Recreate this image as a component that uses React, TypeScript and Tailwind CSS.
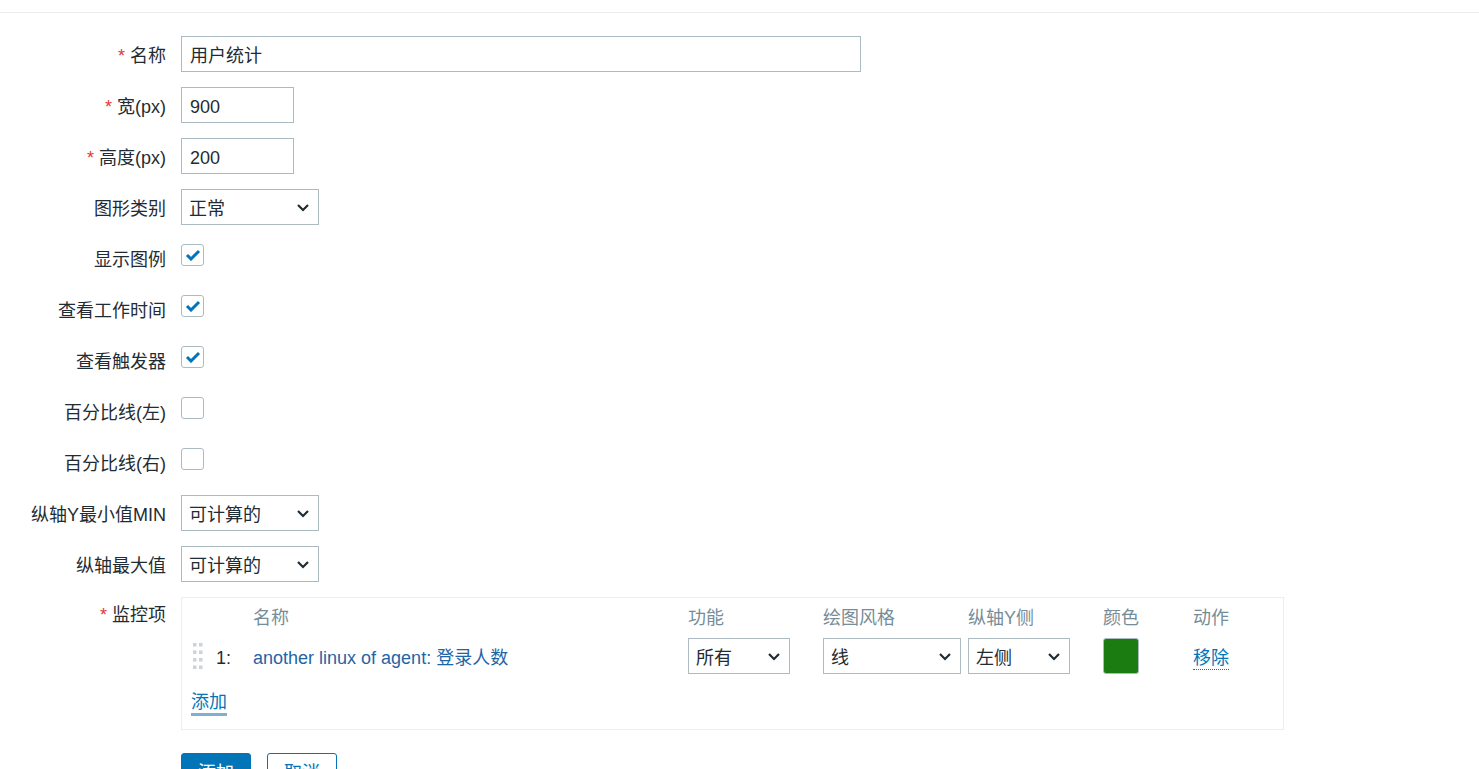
import React from "react";

const FONT = { fontFamily: '"Liberation Sans", Arial, "Noto Sans CJK SC", sans-serif' };

function Chevron() {
  return (
    <svg width="14" height="9" viewBox="0 0 14 9" className="shrink-0">
      <path d="M2 2 L7 7 L12 2" fill="none" stroke="#1f2c33" strokeWidth="2.2" />
    </svg>
  );
}

function Select({ value, width }: { value: string; width: string }) {
  return (
    <div className={`${width} h-[36px] border border-[#acbbc2] bg-white flex items-center justify-between pl-[7px] pr-[8px] text-[#1f2c33]`}>
      <span className="pt-[3px]">{value}</span>
      <Chevron />
    </div>
  );
}

function Checkbox({ checked }: { checked?: boolean }) {
  return (
    <div className="w-[23px] h-[22px] mt-[4px] border border-[#acbbc2] rounded-[3px] bg-white flex items-center justify-center">
      {checked && (
        <svg width="16" height="12" viewBox="0 0 16 12">
          <path d="M2 6 L6 10 L14 2" fill="none" stroke="#0275b8" strokeWidth="3" />
        </svg>
      )}
    </div>
  );
}

function Row({ label, required, children, top }: { label: string; required?: boolean; children: React.ReactNode; top?: boolean }) {
  return (
    <div className="flex">
      <div className={`w-[166px] shrink-0 h-[36px] flex ${top ? "items-start pt-[6px]" : "items-center pt-[3px]"} justify-end text-[#1f2c33] whitespace-nowrap`}>
        {required && <span className="text-[#e33734] mr-[5px]">*</span>}
        {label}
      </div>
      <div className="ml-[15px] flex-1 min-w-0">{children}</div>
    </div>
  );
}

function TextInput({ value, width }: { value: string; width: string }) {
  return (
    <div className={`${width} h-[36px] border border-[#acbbc2] flex items-center pl-[8px] pt-[3px] text-[#1f2c33]`}>{value}</div>
  );
}

function DragHandle() {
  const dots = [];
  for (let r = 0; r < 4; r++) {
    for (let c = 0; c < 2; c++) {
      dots.push(<rect key={`${r}-${c}`} x={c * 6} y={r * 7.5} width="3.5" height="3.5" fill="#cdd3d7" />);
    }
  }
  return (
    <svg width="10" height="26" viewBox="0 0 10 26">
      {dots}
    </svg>
  );
}

function ItemsTable() {
  return (
    <div className="w-[1103px] border border-[#ebeef0] px-[9px] pt-[8px] pb-[14px]">
      <div className="flex h-[24px] items-center text-[#768d99]">
        <div className="w-[22px]" />
        <div className="w-[40px]" />
        <div className="w-[435px]">名称</div>
        <div className="w-[135px]">功能</div>
        <div className="w-[145px]">绘图风格</div>
        <div className="w-[135px]">纵轴Y侧</div>
        <div className="w-[90px]">颜色</div>
        <div>动作</div>
      </div>
      <div className="flex h-[36px] items-center mt-[8px]">
        <div className="w-[22px] pl-[2px] flex items-center">
          <DragHandle />
        </div>
        <div className="w-[40px] pl-[3px] pt-[3px] text-[#1f2c33]">1:</div>
        <div className="w-[435px] pt-[3px] text-[#1f65a6]">another linux of agent: 登录人数</div>
        <div className="w-[135px]">
          <Select value="所有" width="w-[102px]" />
        </div>
        <div className="w-[145px]">
          <Select value="线" width="w-[138px]" />
        </div>
        <div className="w-[135px]">
          <Select value="左侧" width="w-[102px]" />
        </div>
        <div className="w-[90px]">
          <div className="w-[36px] h-[36px] bg-[#1a7c11] border border-[#acbbc2] rounded-[3px]" />
        </div>
        <div className="pt-[3px]">
          <span className="text-[#0275b8] border-b border-dotted border-[#0275b8] leading-[22px] inline-block">移除</span>
        </div>
      </div>
      <div className="mt-[17px] h-[24px] flex items-center">
        <span className="text-[#0275b8] leading-[22px] border-b-[3px] border-[#7fb0d4] inline-block">添加</span>
      </div>
    </div>
  );
}

export default function App() {
  return (
    <div className="min-h-screen bg-white text-[18px] leading-[24px]" style={FONT}>
      <div className="h-[12px]" />
      <div className="h-px bg-[#ebeef0]" />
      <div className="pt-[23px] flex flex-col gap-[15px]">
        <Row label="名称" required>
          <TextInput value="用户统计" width="w-[680px]" />
        </Row>
        <Row label="宽(px)" required>
          <TextInput value="900" width="w-[113px]" />
        </Row>
        <Row label="高度(px)" required>
          <TextInput value="200" width="w-[113px]" />
        </Row>
        <Row label="图形类别">
          <Select value="正常" width="w-[138px]" />
        </Row>
        <Row label="显示图例">
          <Checkbox checked />
        </Row>
        <Row label="查看工作时间">
          <Checkbox checked />
        </Row>
        <Row label="查看触发器">
          <Checkbox checked />
        </Row>
        <Row label="百分比线(左)">
          <Checkbox />
        </Row>
        <Row label="百分比线(右)">
          <Checkbox />
        </Row>
        <Row label="纵轴Y最小值MIN">
          <Select value="可计算的" width="w-[138px]" />
        </Row>
        <Row label="纵轴最大值">
          <Select value="可计算的" width="w-[138px]" />
        </Row>
        <Row label="监控项" required top>
          <ItemsTable />
        </Row>
        <div className="flex pl-[181px] gap-[16px] mt-[8px] pb-[20px]">
          <button className="w-[70px] h-[36px] pt-[3px] bg-[#0275b8] text-white rounded-[3px] border border-[#0275b8]">添加</button>
          <button className="w-[70px] h-[36px] pt-[3px] bg-white text-[#0275b8] rounded-[3px] border border-[#0275b8]">取消</button>
        </div>
      </div>
    </div>
  );
}
